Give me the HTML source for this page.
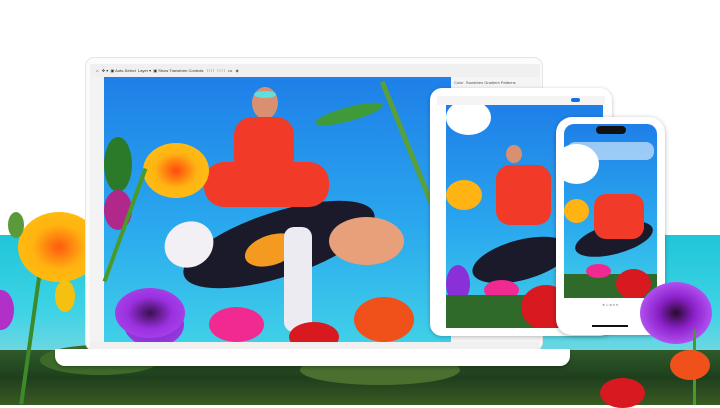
<!DOCTYPE html>
<html><head><style>
*{margin:0;padding:0;box-sizing:border-box}
body{width:720px;height:405px;overflow:hidden;background:#fff;position:relative;font-family:"Liberation Sans",sans-serif}
.a{position:absolute}
.sky{background:linear-gradient(180deg,#1e7fe8 0%,#2aa7ee 55%,#3fd0e8 100%)}
.e{position:absolute;border-radius:50%}
</style></head><body>
<div class="a" style="left:0;top:235px;width:720px;height:130px;background:linear-gradient(180deg,#1fc6d8,#3fd3e6 60%,#7fd8e0)"></div>
<div class="a" style="left:0;top:350px;width:720px;height:55px;background:linear-gradient(180deg,#2f5a2a,#1e3f1c 50%,#3a5a22)"></div>
<div class="e" style="left:40px;top:345px;width:120px;height:30px;background:#3d6a2a"></div>
<div class="e" style="left:300px;top:355px;width:160px;height:30px;background:#4a7030"></div>
<div class="a" style="left:30px;top:250px;width:4px;height:155px;background:#3d8a2a;transform:rotate(8deg)"></div>
<div class="e" style="left:18px;top:212px;width:82px;height:70px;background:radial-gradient(#ff5a10,#ffb310 45%,#ffc20e)"></div>
<div class="e" style="left:55px;top:280px;width:20px;height:32px;background:#f5c010"></div>
<div class="e" style="left:-12px;top:290px;width:26px;height:40px;background:#b030c8"></div>
<div class="e" style="left:8px;top:212px;width:16px;height:26px;background:#5a9a3a"></div>
<div class="a" style="left:85px;top:57px;width:458px;height:294px;background:#fbfbfb;border-radius:9px;border:1px solid #e4e4e4"></div>
<div class="a" style="left:55px;top:349px;width:515px;height:17px;background:#fff;border-radius:0 0 10px 10px;box-shadow:0 2px 3px rgba(0,0,0,.25)"></div>
<div class="a" style="left:90px;top:64px;width:450px;height:13px;background:#f0f0f0;font-size:4px;color:#333;line-height:13px;padding-left:6px;white-space:nowrap">⌂ &nbsp; ✥ ▾ &nbsp;▣ Auto-Select &nbsp;Layer ▾ &nbsp;▣ Show Transform Controls &nbsp; ⫶ ⫶ ⫶ ⫶ &nbsp; ⫶ ⫶ ⫶ ⫶ &nbsp; ••• &nbsp; ◈</div>
<div class="a" style="left:90px;top:77px;width:14px;height:265px;background:#f3f3f3"></div>
<div class="a" style="left:451px;top:77px;width:90px;height:265px;background:#f5f5f5;font-size:4px;color:#555;padding:3px">Color &nbsp;Swatches Gradient Patterns</div>
<div class="a" style="left:90px;top:342px;width:450px;height:7px;background:#f0f0f0"></div>
<div class="a sky" style="left:104px;top:77px;width:347px;height:265px;overflow:hidden">
 <div class="e" style="left:210px;top:30px;width:70px;height:14px;background:#3f9a3a;transform:rotate(-15deg)"></div>
 <div class="a" style="left:300px;top:0;width:5px;height:130px;background:#5aa03a;transform:rotate(-22deg)"></div>
 <div class="e" style="left:75px;top:135px;width:200px;height:65px;background:#1a1a2a;transform:rotate(-18deg)"></div>
 <div class="e" style="left:140px;top:158px;width:55px;height:30px;background:#f59a20;transform:rotate(-18deg)"></div>
 <div class="e" style="left:148px;top:10px;width:26px;height:32px;background:#d89070"></div>
 <div class="e" style="left:150px;top:14px;width:22px;height:7px;background:#5ee0e0"></div>
 <div class="a" style="left:130px;top:40px;width:60px;height:60px;background:#f23a28;border-radius:18px"></div>
 <div class="a" style="left:100px;top:85px;width:125px;height:45px;background:#f23a28;border-radius:20px"></div>
 <div class="e" style="left:60px;top:145px;width:50px;height:45px;background:#f2f0f4;transform:rotate(-30deg)"></div>
 <div class="a" style="left:180px;top:150px;width:28px;height:105px;background:#ecebf2;border-radius:10px"></div>
 <div class="e" style="left:225px;top:140px;width:75px;height:48px;background:#e8a07a"></div>
 <div class="e" style="left:20px;top:225px;width:60px;height:45px;background:radial-gradient(#4a1a50,#8a30d8 40%,#a040e0)"></div>
 <div class="e" style="left:105px;top:230px;width:55px;height:35px;background:#f02a90"></div>
 <div class="e" style="left:250px;top:220px;width:60px;height:45px;background:#f0501a"></div>
 <div class="e" style="left:185px;top:245px;width:50px;height:30px;background:#d81a20"></div>
 <div class="e" style="left:0px;top:60px;width:28px;height:55px;background:#2a7a2a"></div>
</div>
<div class="e" style="left:143px;top:143px;width:66px;height:55px;background:radial-gradient(#ff4a10,#ffb412 45%,#ffc414)"></div>
<div class="e" style="left:104px;top:190px;width:28px;height:40px;background:#b0288a"></div>
<div class="e" style="left:115px;top:288px;width:70px;height:50px;background:radial-gradient(#3a1050,#9a30e0 45%,#b050f0)"></div>
<div class="a" style="left:123px;top:165px;width:4px;height:120px;background:#4a9a2a;transform:rotate(20deg)"></div>
<div class="a" style="left:430px;top:88px;width:182px;height:248px;background:#fff;border-radius:12px;box-shadow:0 1px 4px rgba(0,0,0,.25)"></div>
<div class="a" style="left:437px;top:96px;width:168px;height:9px;background:#f4f4f4"></div>
<div class="a" style="left:571px;top:98px;width:9px;height:4px;background:#1a6fe0;border-radius:2px"></div>
<div class="a sky" style="left:446px;top:105px;width:157px;height:223px;overflow:hidden">
 <div class="e" style="left:0;top:-5px;width:45px;height:35px;background:#fff"></div>
 <div class="e" style="left:25px;top:135px;width:100px;height:40px;background:#1a1a2a;transform:rotate(-15deg)"></div>
 <div class="e" style="left:60px;top:40px;width:16px;height:18px;background:#d89070"></div>
 <div class="a" style="left:50px;top:60px;width:55px;height:60px;background:#f23a28;border-radius:14px"></div>
 <div class="e" style="left:0;top:75px;width:36px;height:30px;background:#ffb414"></div>
 <div class="e" style="left:0;top:160px;width:24px;height:38px;background:#8a30d8"></div>
 <div class="e" style="left:38px;top:175px;width:35px;height:20px;background:#f02a90"></div>
 <div class="a" style="left:0;top:190px;width:157px;height:33px;background:#2f6a2a"></div>
 <div class="e" style="left:75px;top:180px;width:50px;height:45px;background:#d81a20"></div>
</div>
<div class="a" style="left:556px;top:117px;width:109px;height:218px;background:#fff;border-radius:16px;box-shadow:0 1px 5px rgba(0,0,0,.3)"></div>
<div class="a sky" style="left:564px;top:124px;width:93px;height:174px;border-radius:10px 10px 0 0;overflow:hidden">
 <div class="e" style="left:-10px;top:20px;width:45px;height:40px;background:#fff"></div>
 <div class="a" style="left:3px;top:18px;width:87px;height:18px;background:rgba(255,255,255,.55);border-radius:8px"></div>
 <div class="e" style="left:10px;top:100px;width:80px;height:30px;background:#1a1a2a;transform:rotate(-15deg)"></div>
 <div class="a" style="left:30px;top:70px;width:50px;height:45px;background:#f23a28;border-radius:12px"></div>
 <div class="e" style="left:0;top:75px;width:25px;height:24px;background:#ffb414"></div>
 <div class="a" style="left:0;top:150px;width:93px;height:24px;background:#2f6a2a"></div>
 <div class="e" style="left:52px;top:145px;width:35px;height:30px;background:#d81a20"></div>
 <div class="e" style="left:22px;top:140px;width:25px;height:14px;background:#f02a90"></div>
</div>
<div class="a" style="left:596px;top:126px;width:30px;height:8px;background:#111;border-radius:4px"></div>
<div class="a" style="left:564px;top:303px;width:93px;height:12px;font-size:3px;color:#555;display:flex;justify-content:space-around">✣ ⚇ ⊘ ✎ ↻</div>
<div class="a" style="left:592px;top:325px;width:36px;height:2px;background:#111"></div>
<div class="e" style="left:640px;top:282px;width:72px;height:62px;background:radial-gradient(#2a0a30,#8a20c8 35%,#b050f0 70%,#c070ff)"></div>
<div class="a" style="left:693px;top:330px;width:3px;height:75px;background:#4a9a2a"></div>
<div class="e" style="left:600px;top:378px;width:45px;height:30px;background:#d81a20"></div>
<div class="e" style="left:670px;top:350px;width:40px;height:30px;background:#f0501a"></div>
</body></html>
